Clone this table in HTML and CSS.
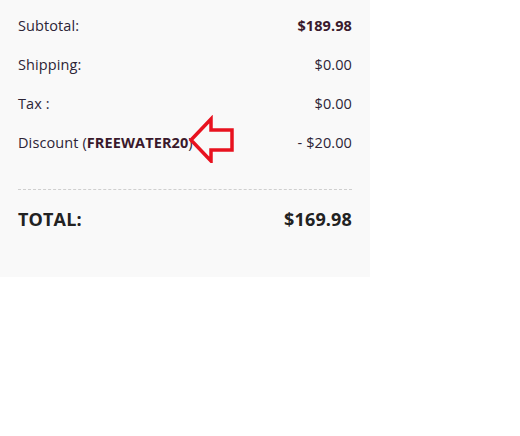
FILE: index.html
```html
<!DOCTYPE html>
<html>
<head>
<meta charset="utf-8">
<link rel="stylesheet" href="styles.css">
</head>
<body>
<div class="panel">
  <div class="row"><span class="label">Subtotal:</span><span class="value strong">$189.98</span></div>
  <div class="row"><span class="label">Shipping:</span><span class="value">$0.00</span></div>
  <div class="row"><span class="label">Tax :</span><span class="value">$0.00</span></div>
  <div class="row"><span class="label discount">Discount (<b class="code">FREEWATER20</b>)<svg class="arrow" width="48" height="48" viewBox="0 0 48 48"><path d="M4 25 L24 4 L24 15 L45 15 L45 35 L24 35 L24 46 Z" fill="none" stroke="#e8121f" stroke-width="3.5" stroke-linejoin="miter"/></svg></span><span class="value">- $20.00</span></div>
  <div class="divider"></div>
  <div class="row total"><span class="label">TOTAL:</span><span class="value">$169.98</span></div>
</div>
</body>
</html>
```
FILE: styles.css
```css
html, body {
  margin: 0;
  padding: 0;
  background: #ffffff;
}
.panel {
  width: 370px;
  height: 277px;
  box-sizing: border-box;
  background: #f9f9f9;
  padding: 6px 18px 0 18px;
  font-family: "Open Sans", "Liberation Sans", sans-serif;
  font-size: 14.5px;
  letter-spacing: 0.1px;
  color: #2c2436;
}
.row {
  display: flex;
  justify-content: space-between;
  align-items: center;
  height: 39px;
}
.value {
  color: #2c2436;
}
.strong {
  font-weight: 700;
  color: #3a1a2c;
}
.discount {
  position: relative;
}
.code {
  font-weight: 700;
  color: #3a1a2c;
}
.arrow {
  position: absolute;
  left: 169px;
  top: -18px;
}
.divider {
  margin-top: 27px;
  border-top: 1px dashed #cfcfcf;
}
.total {
  margin-top: 14px;
  height: 30px;
  font-size: 18px;
  letter-spacing: 0.15px;
  font-weight: 700;
}
.total .label, .total .value {
  color: #222222;
}
```
